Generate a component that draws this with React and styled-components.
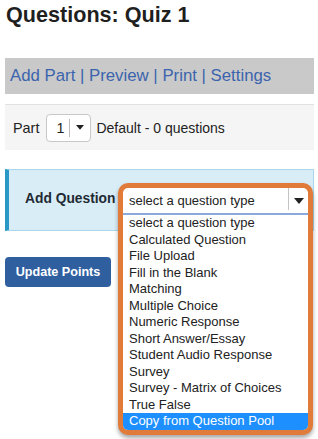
import React from "react";
import styled, { createGlobalStyle } from "styled-components";

const Global = createGlobalStyle`
  html, body { margin: 0; padding: 0; background: #fff; }
  body { font-family: "Liberation Sans", Arial, sans-serif; color: #222; }
`;

const Page = styled.div`
  min-height: 439px;
  box-sizing: border-box;
  padding: 0 4px 0 5px;
`;

const Title = styled.h1`
  margin: 3px 0 0 1px;
  font-size: 21.6px;
  line-height: 24px;
  font-weight: bold;
  color: #1f1f1f;
`;

const NavBar = styled.div`
  margin-top: 31px;
  height: 36px;
  line-height: 36px;
  background: #c9c9c9;
  padding-left: 5px;
  font-size: 16.8px;
  color: #3b64ad;
  white-space: nowrap;
`;

const NavLink = styled.a`
  color: #3b64ad;
  text-decoration: none;
`;

const PartBar = styled.div`
  margin-top: 10px;
  height: 45px;
  border-top: 1px solid #e2e2e2;
  background: #f5f5f5;
  display: flex;
  align-items: center;
  padding-left: 8px;
  font-size: 14px;
  color: #222;
`;

const PartLabel = styled.span`
  margin-right: 7px;
  font-size: 14.4px;
`;

const SmallSelect = styled.div`
  width: 43px;
  height: 26px;
  border: 1px solid #c8c8c8;
  border-radius: 4px;
  background: #fff;
  display: flex;
  align-items: center;
  margin-right: 5px;
`;

const SmallValue = styled.span`
  width: 22px;
  padding-left: 9px;
  box-sizing: border-box;
  font-size: 14.4px;
`;

const SmallDivider = styled.span`
  width: 1px;
  height: 18px;
  background: #bbb;
`;

const Caret = styled.span`
  flex: 1;
  display: flex;
  justify-content: center;
  align-items: center;
`;

const Triangle = ({ w = 8 }) => (
  <svg width={w} height={w * 0.6} viewBox="0 0 10 6">
    <path d="M0 0 L10 0 L5 6 Z" fill="#222" />
  </svg>
);

const InfoPanel = styled.div`
  margin-top: 19px;
  height: 60px;
  background: #d9edf7;
  border: 1px solid #a9d6ec;
  border-left: 4px solid #2b97c6;
  display: flex;
  align-items: flex-start;
  padding-left: 16px;
`;

const PanelLabel = styled.span`
  width: 93px;
  margin-top: 21px;
  font-size: 13.8px;
  font-weight: bold;
  color: #1f2a33;
  white-space: nowrap;
  overflow: hidden;
`;

const Anchor = styled.div`
  position: relative;
  width: 195px;
  height: 36px;
  margin-top: 13px;
`;

const Callout = styled.div`
  position: absolute;
  top: 0;
  left: 0;
  width: 195px;
  box-sizing: border-box;
  border: 5px solid #e07b39;
  border-radius: 10px;
  background: #fff;
  overflow: hidden;
  box-shadow: 0 3px 4px rgba(0, 0, 0, 0.35);
  z-index: 2;
`;

const SelectRow = styled.div`
  height: 25px;
  border-bottom: 2px solid #8aa9dd;
  display: flex;
  align-items: center;
  font-size: 13px;
  color: #222;
`;

const SelectText = styled.span`
  flex: 1;
  padding-left: 6px;
`;

const SelectDivider = styled.span`
  width: 1px;
  height: 22px;
  align-self: flex-start;
  background: #c4c4c4;
`;

const SelectCaret = styled.span`
  width: 19px;
  display: flex;
  justify-content: center;
  align-items: center;
`;

const List = styled.ul`
  list-style: none;
  margin: 0;
  padding: 0;
`;

const Option = styled.li`
  font-size: 13px;
  line-height: 16.5px;
  padding-left: 6px;
  color: ${(p) => (p.$active ? "#fff" : "#222")};
  background: ${(p) => (p.$active ? "#1e8fff" : "transparent")};
  white-space: nowrap;
`;

const Button = styled.button`
  display: block;
  margin-top: 26px;
  width: 106px;
  height: 30px;
  border: 0;
  border-radius: 4px;
  background: #2f5f9f;
  color: #fff;
  font-family: "Liberation Sans", Arial, sans-serif;
  font-size: 12.6px;
  font-weight: bold;
  padding: 0;
`;

const options = [
  "select a question type",
  "Calculated Question",
  "File Upload",
  "Fill in the Blank",
  "Matching",
  "Multiple Choice",
  "Numeric Response",
  "Short Answer/Essay",
  "Student Audio Response",
  "Survey",
  "Survey - Matrix of Choices",
  "True False",
  "Copy from Question Pool",
];

export default function App() {
  const links = ["Add Part", "Preview", "Print", "Settings"];
  return (
    <Page>
      <Global />
      <Title>Questions: Quiz 1</Title>
      <NavBar>
        {links.map((l, i) => (
          <React.Fragment key={l}>
            {i > 0 && " | "}
            <NavLink href="#">{l}</NavLink>
          </React.Fragment>
        ))}
      </NavBar>
      <PartBar>
        <PartLabel>Part</PartLabel>
        <SmallSelect>
          <SmallValue>1</SmallValue>
          <SmallDivider />
          <Caret>
            <Triangle w={8} />
          </Caret>
        </SmallSelect>
        <span>Default - 0 questions</span>
      </PartBar>
      <InfoPanel>
        <PanelLabel>Add Question</PanelLabel>
        <Anchor>
          <Callout>
            <SelectRow>
              <SelectText>select a question type</SelectText>
              <SelectDivider />
              <SelectCaret>
                <Triangle w={10} />
              </SelectCaret>
            </SelectRow>
            <List>
              {options.map((o, i) => (
                <Option key={o} $active={i === options.length - 1}>
                  {o}
                </Option>
              ))}
            </List>
          </Callout>
        </Anchor>
      </InfoPanel>
      <Button>Update Points</Button>
    </Page>
  );
}
